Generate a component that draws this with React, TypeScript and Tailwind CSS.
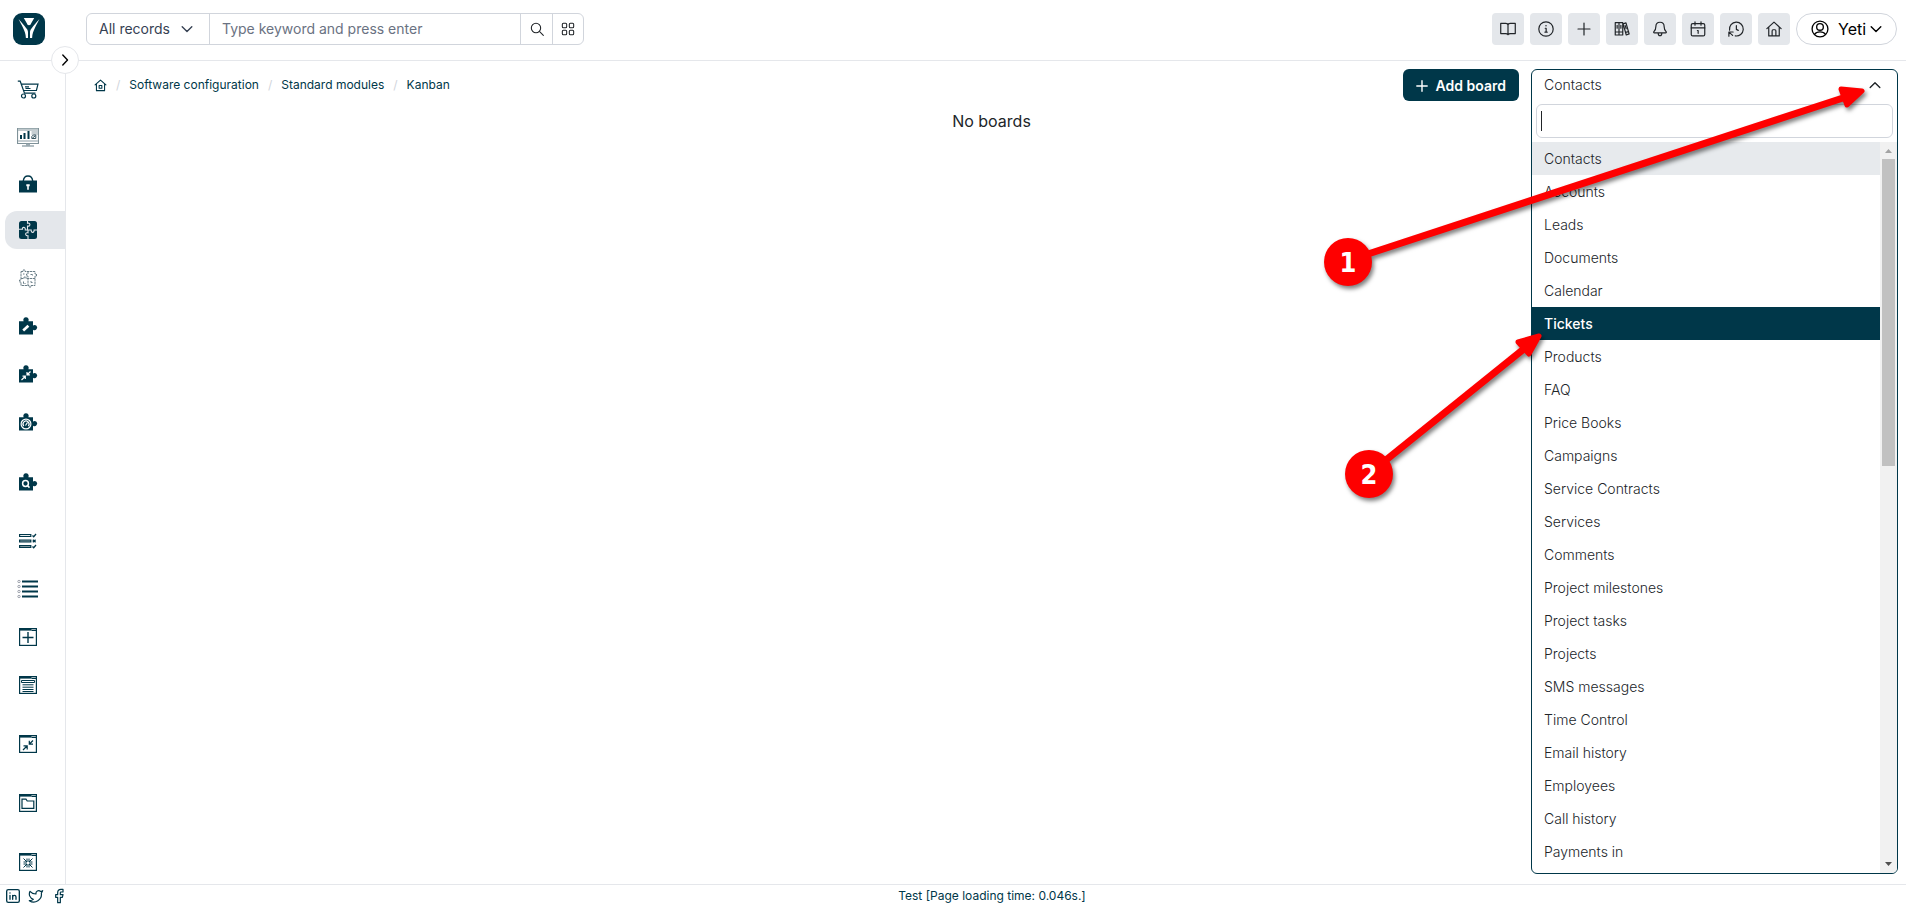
import React, { useState } from "react";
import { Twitter, Facebook } from "lucide-react";

type IconProps = { className?: string; children: React.ReactNode; box?: string; label?: string };

function Line({ className = "size-5", children, box = "0 0 24 24" }: IconProps) {
  return (
    <svg
      className={className}
      viewBox={box}
      fill="none"
      stroke="currentColor"
      strokeWidth="1.6"
      strokeLinecap="round"
      strokeLinejoin="round"
      aria-hidden="true"
    >
      {children}
    </svg>
  );
}

const Chevron = ({ d, className = "size-3" }: { d: string; className?: string }) => (
  <svg className={className} viewBox="0 0 12 12" fill="none" stroke="currentColor" strokeWidth="1.4" strokeLinecap="round" strokeLinejoin="round" aria-hidden="true">
    <path d={d} />
  </svg>
);
const DOWN = "M1.2 3.800 6 8.500 10.800 3.800";
const UP = "M1.2 8.500 6 3.800l4.800 4.700";
const RIGHT = "M3.800 1 8.500 6 3.800 11";

function Logo() {
  return (
    <svg className="size-8" viewBox="0 0 32 32" aria-hidden="true">
      <rect width="32" height="32" rx="9" fill="#003749" />
      <path fill="#fff" d="M10.800 5h10.400l-3 5.300c-.5 1-.8 2-2.200 2s-1.700-1-2.200-2z" />
      <path fill="#fff" d="M5.600 6c1 1.200 6.500 7.500 8.300 10 .8 1.200 1.100 2 1.100 3.500V25h-2.100c-.2-4-1.300-7-2.900-10.200C8.800 12 6.600 8.500 5.600 6z" />
      <path fill="#fff" d="M26.400 6c-1 1.200-6.500 7.500-8.300 10-.8 1.200-1.100 2-1.100 3.500V25h2.100c.2-4 1.300-7 2.900-10.200C23.200 12 25.400 8.500 26.400 6z" />
    </svg>
  );
}

/* ---------- top bar icons ---------- */
const topIcons: { name: string; icon: React.ReactNode }[] = [
  { name: "Manual", icon: <Line><path d="M2.300 4.500h6.500C11 4.500 12 5.700 12 7v12.500c-.7-1-1.800-1.400-3.200-1.400H2.300zM21.700 4.500h-6.500C13 4.500 12 5.700 12 7v12.500c.7-1 1.800-1.400 3.200-1.400h6.500z" /></Line> },
  { name: "Information", icon: <Line><circle cx="12" cy="12" r="9.600" /><path d="M11 11h1.200v5.200M10.600 16.200h3" /><path d="M12 7.500v.3" strokeWidth="2" /></Line> },
  { name: "Create", icon: <Line><path d="M12 4v16M4 12h16" /></Line> },
  {
    name: "Library",
    icon: (
      <Line>
        <path d="M3 3.500h5v16.500H3zM8 3.500h5v16.500H8zM3 16h10M5.500 7v4M10.500 7v4M13.500 5.200l3.800-1.300 4.200 14.600-3.800 1.500zM17 16.500l3.800-1.200M16.300 7.500l1.200 4" />
      </Line>
    ),
  },
  { name: "Notifications", icon: <Line><path d="M12 3c-3.400 0-5.500 2.500-5.500 5.600 0 4.400-1.300 5.600-2.700 7-.5.600-.2 1.600.7 1.600h15c.9 0 1.200-1 .7-1.600-1.400-1.400-2.700-2.600-2.700-7C17.500 5.500 15.400 3 12 3zM9.600 17.500c0 2 1 3.300 2.400 3.300s2.400-1.300 2.400-3.300" /></Line> },
  { name: "Calendar", icon: <Line><rect x="3" y="4.800" width="18" height="16.400" rx="2" /><path d="M3 10.500h18M8 2.500V7M16 2.500V7M11.200 14h1v3.800" /></Line> },
  { name: "History", icon: <Line><path d="M3.400 13.500A9.200 9.200 0 1 1 11 21.200M2.500 16h5.700M2.500 16v5.500M3 16.500l4.500 4" /><path d="M12.500 7.500v5l2.500 1.300" /></Line> },
  { name: "Home", icon: <Line><path d="M2.500 11.500 12 2.800l9.500 8.700M5 9.500v11.700h14V9.500M9.500 21v-6.500c0-1 .4-1.500 1.200-1.500h2.600c.8 0 1.200.5 1.200 1.500V21" /></Line> },
];

/* ---------- side menu icons ---------- */
const Side = ({ children }: { children: React.ReactNode }) => (
  <svg className="h-[22px] w-[22px]" viewBox="0 0 22 22" fill="none" stroke="#003749" strokeWidth="1.2" aria-hidden="true">
    {children}
  </svg>
);

const Piece = ({ children }: { children?: React.ReactNode }) => (
  <Side>
    <path fill="#003749" stroke="none" d="M2 6.200h4.600a2.700 2.700 0 1 1 4.800 0H16v4.300a2.600 2.600 0 1 1 0 4.200V19.500H2z" />
    <g stroke="#fff">{children}</g>
  </Side>
);

const Frame = ({ children }: { children?: React.ReactNode }) => (
  <Side>
    <rect x="2.600" y="2.600" width="16.800" height="16.800" />
    <path d="M2 3.600h12.500" strokeWidth="2" />
    <path d="M14.500 4.400H20" />
    {children}
  </Side>
);

const cart = (
  <Side>
    <path d="M.8 2.200h2.400l4.300 12h11M4.300 5.200H21l-1.600 6.300H6.500M8 7.800h4M8.500 9.500h5" />
    <circle cx="6.500" cy="17" r="2" />
    <circle cx="16.800" cy="17" r="2" />
  </Side>
);
const monitor = (
  <Side>
    <path d="M.5 2.500h21v15H.5z" stroke="#7f9299" />
    <path d="M1 3.800h20" stroke="#bfc9cd" strokeWidth="2.400" />
    <path d="M14.500 4h6.500v5h-6.500z" fill="#c6ced2" stroke="none" />
    <path d="M1 15h20" stroke="#c6ced2" strokeWidth="2" />
    <path d="M9 18.500h4M5 20h12" stroke="#9aa9b0" strokeWidth="1.500" />
    <path d="M4 13V9M7.500 13V7M11.500 13V5" strokeWidth="2" />
    <path d="M14.800 12.500h4v-3.500h-2.500l-1.500 1.500zM15.500 12l2.500-2" stroke="#35525e" strokeWidth="1" />
  </Side>
);
const bag = (
  <Side>
    <path fill="#003749" stroke="none" d="M2 7.500h18v12H2z" />
    <path d="M6.300 8c.3-3.300 2-5 4.700-5s4.400 1.700 4.700 5" strokeWidth="1.400" />
    <path d="M9.300 11.300h3.400v2h-.9v3.400h-1.600v-3.400h-.9z" fill="#fff" stroke="none" />
  </Side>
);
const puzzle = (
  <Side>
    <rect x="2" y="2" width="18" height="18" rx="2.500" fill="#003749" stroke="none" />
    <path
      stroke="#e4e7eb"
      strokeWidth="1.100"
      d="M10.500 2v2.300c2.600-1 3.300 2.600 1 2.800h-1v3.900M2 10.300h3.500c-.8-2.400 3-2.700 2.800 0v.7H11M11 11h3.200c-.2 3.600 3.300 2.700 2.900 0H20M11 11v2.800c-2.700-.8-3.200 2.600-.8 3H11V20"
    />
  </Side>
);
const outlinePuzzle = (
  <Side>
    <g stroke="#6b7f88" strokeWidth="1" strokeDasharray="2.400 .6">
      <path d="M4 4.500h2V3h2v1.500h10V7h1.500v2H18v9.500h-4V20h-2v-1.500H4V15H2.500v-2H4z" />
      <path d="M11 4.500V7H9.500v2H11v9.500M4 11.500h3V10h2v1.500h9" />
      <path d="M13.500 7.500h2v1.500M6 7h1.500M6.500 14.500v2h2M14 14v1.500h2" />
    </g>
  </Side>
);
const checks = (
  <Side>
    <path d="M2.600 4.500h11.200v2H2.600z" fill="#e6ebed" />
    <path d="M2.600 10h11.200v2H2.600zM2.600 15.500h11.200v2H2.600z" fill="#7f959d" />
    <path d="m15.500 5.500 1.200 1.200L19 4M15.800 9.800l2.800 2.500M18.600 9.800l-2.800 2.500M15.500 16.500l1.200 1.200L19 15" strokeWidth="1.300" />
  </Side>
);
const list = (
  <Side>
    <path d="M5 3.500h16M5 8.500h16M5 13.500h16M5 18.500h16" strokeWidth="2" />
    <g stroke="#8a8f9c" strokeWidth=".8">
      <circle cx="2" cy="3.500" r="1.200" /><circle cx="2" cy="8.500" r="1.200" /><circle cx="2" cy="13.500" r="1.200" /><circle cx="2" cy="18.500" r="1.200" />
    </g>
  </Side>
);

type SideItem = { name: string; icon: React.ReactNode; active?: boolean };
const sideGroups: { spacing: string; items: SideItem[] }[] = [
  {
    spacing: "flex flex-col gap-[9px]",
    items: [
      { name: "Marketplace", icon: cart },
      { name: "System monitoring", icon: monitor },
      { name: "Permissions", icon: bag },
    ],
  },
  {
    spacing: "mt-2 flex flex-col gap-[10px]",
    items: [
      { name: "Standard modules", icon: puzzle, active: true },
      { name: "Module management", icon: outlinePuzzle },
      { name: "Edit modules", icon: <Piece><path d="m6.200 15.500 5.200-4.800" strokeWidth="2.600" /></Piece> },
      { name: "Module relations", icon: <Piece><path d="M4.500 17l3.600-3.500M5.500 13.200h2.800V16M13.500 8.500l-3.300 3.200M10 9v2.800h2.900" /></Piece> },
      { name: "Targets", icon: <Piece><circle cx="9" cy="13" r="4.900" /><path d="M6.800 15a3 3 0 1 1 4.500 0M8.500 14.500l2-3" /></Piece> },
    ],
  },
  {
    spacing: "mt-[22px] flex flex-col",
    items: [{ name: "Search setup", icon: <Piece><circle cx="8.500" cy="12.500" r="2.900" strokeWidth="1.500" /><path d="m10.500 14.600 2 2" strokeWidth="1.500" /></Piece> }],
  },
  {
    spacing: "mt-[21px] flex flex-col gap-[10px]",
    items: [
      { name: "Advanced permissions", icon: checks },
      { name: "Picklists", icon: list },
      { name: "Add field", icon: <Frame><path d="M11 6v11M5.500 11.500h11" strokeWidth="1.400" /></Frame> },
      { name: "Layouts", icon: <Frame><path d="M4.500 6.500h13v2h-13zM5.500 10.800h11M5.500 13.200h11M5.500 15.500h11M5.500 17.500h11" strokeWidth="1" /></Frame> },
    ],
  },
  { spacing: "mt-[21px] flex flex-col", items: [{ name: "Processes", icon: <Frame><path d="m6 17 4-4M6.500 12.800h3.700v3.700M16 7.500l-3.500 3.500M12.300 7.700V11.200H16" /></Frame> }] },
  { spacing: "mt-[21px] flex flex-col", items: [{ name: "Files", icon: <Frame><path d="M5 16.300V7.200h4l1.200 1.800h6.600v7.300z" /></Frame> }] },
  { spacing: "mt-[21px] flex flex-col", items: [{ name: "Integration", icon: <Frame><path d="m6.500 7.500 3.500 3.500M10 7.500V11H6.500M15.500 7.500 12 11M12 7.500V11h3.500M6.500 16.500 10 13M10 16.500V13H6.500M15.500 16.500 12 13M12 16.500V13h3.500" strokeWidth="1" /></Frame> }] },
];

const modules = [
  "Contacts", "Accounts", "Leads", "Documents", "Calendar", "Tickets", "Products", "FAQ", "Price Books", "Campaigns",
  "Service Contracts", "Services", "Comments", "Project milestones", "Project tasks", "Projects", "SMS messages",
  "Time Control", "Email history", "Employees", "Call history", "Payments in",
];

function Header() {
  return (
    <header className="flex h-[61px] shrink-0 items-start border-b border-gray-200 pt-[13px] pr-[9px] text-[#212529]">
      <a href="#home" aria-label="YetiForce" className="ml-[13px]"><Logo /></a>
      <form className="ml-[41px] flex h-8 w-[498px] overflow-hidden rounded-md border border-gray-300" onSubmit={(e) => e.preventDefault()}>
        <button type="button" className="flex w-[122px] items-center justify-between pr-4 pl-3 text-sm text-gray-700">
          All records
          <Chevron d={DOWN} />
        </button>
        <input
          aria-label="Search"
          placeholder="Type keyword and press enter"
          className="min-w-0 flex-1 border-l border-gray-300 px-3 text-sm outline-none placeholder:text-gray-500"
        />
        <button type="button" aria-label="Search records" className="flex w-8 items-center justify-center border-l border-gray-300">
          <Line className="size-4"><circle cx="10.500" cy="10.500" r="7" /><path d="m16 16 5.500 5.500" /></Line>
        </button>
        <button type="button" aria-label="Advanced search" className="flex w-[31px] items-center justify-center border-l border-gray-300">
          <Line className="size-4"><rect x="3.500" y="3.500" width="6.500" height="6.500" rx="1.500" /><rect x="14" y="3.500" width="6.500" height="6.500" rx="1.500" /><rect x="3.500" y="14" width="6.500" height="6.500" rx="1.500" /><rect x="14" y="14" width="6.500" height="6.500" rx="1.500" /></Line>
        </button>
      </form>
      <div className="ml-auto flex gap-[6px]">
        {topIcons.map((t) => (
          <button key={t.name} type="button" aria-label={t.name} className="flex size-8 items-center justify-center rounded bg-[#e4e7eb] [&>svg]:size-[18px]">
            {t.icon}
          </button>
        ))}
        <button type="button" className="flex h-8 w-[101px] items-center rounded-2xl border border-gray-300 pl-[13px] text-base text-black">
          <Line className="size-5"><circle cx="12" cy="12" r="9.500" /><circle cx="12" cy="9.500" r="4" /><path d="M5.500 18.500c1.500-2.500 3.500-3 6.500-3s5 .5 6.500 3" /></Line>
          <span className="ml-2 mr-1">Yeti</span>
          <Chevron d={DOWN} />
        </button>
      </div>
    </header>
  );
}

function SideMenu() {
  return (
    <aside className="relative w-[66px] shrink-0 border-r border-gray-200">
      <button type="button" aria-label="Expand menu" className="absolute -top-[15px] -right-[14px] z-10 flex size-7 items-center justify-center rounded-full border border-gray-200 bg-white text-black">
        <Chevron d={RIGHT} />
      </button>
      <nav className="flex flex-col pt-[10px]">
        {sideGroups.map((group) => (
          <div key={group.items[0].name} className={group.spacing}>
            {group.items.map((item) => (
              <a
                key={item.name}
                href="#menu"
                aria-label={item.name}
                className={item.active ? "ml-[5px] flex h-[38px] items-center rounded-l-xl bg-[#e4e7eb] pl-3" : "ml-[5px] flex h-[38px] items-center pl-3"}
              >
                {item.icon}
              </a>
            ))}
          </div>
        ))}
      </nav>
    </aside>
  );
}

function ModuleSelect() {
  const [query, setQuery] = useState("");
  return (
    <section className="flex min-h-0 w-[367px] shrink-0 flex-col overflow-hidden rounded-md border border-[#003749] text-sm font-light text-[#212529]">
      <button type="button" aria-expanded="true" className="flex h-8 shrink-0 items-center justify-between pr-4 pb-0.5 pl-3">
        Contacts
        <Chevron d={UP} />
      </button>
      <div className="relative px-1 pt-0.5 pb-1">
        <input
          aria-label="Filter modules"
          value={query}
          onChange={(e) => setQuery(e.target.value)}
          className="block h-[34px] w-full rounded-md border border-gray-300 px-1 text-base outline-none"
        />
        {query === "" && <span className="pointer-events-none absolute top-[9px] left-[9px] h-5 w-px bg-[#212529]" />}
      </div>
      <div className="flex min-h-0 flex-1">
        <ul className="min-w-0 flex-1 overflow-y-auto [scrollbar-width:none]" role="listbox" aria-label="Modules">
          {modules.map((m) => (
            <li
              key={m}
              role="option"
              aria-selected={m === "Contacts"}
              className={
                m === "Tickets"
                  ? "h-[33px] bg-[#003749] px-3 leading-[33px] font-medium text-white"
                  : m === "Contacts"
                    ? "h-[33px] bg-[#e7eaed] px-3 leading-[33px]"
                    : "h-[33px] px-3 leading-[33px]"
              }
            >
              {m}
            </li>
          ))}
        </ul>
        <div className="flex w-[17px] flex-col items-center bg-[#f1f1f1]" aria-hidden="true">
          <svg className="h-[17px] w-[17px] shrink-0" viewBox="0 0 17 17"><path d="M5 11h7L8.500 7z" fill="#a3a3a3" /></svg>
          <div className="flex min-h-0 w-[13px] flex-1 flex-col">
            <div className="h-[44%] bg-[#c1c1c1]" />
          </div>
          <svg className="h-[17px] w-[17px] shrink-0" viewBox="0 0 17 17"><path d="M5 6h7l-3.500 4z" fill="#505050" /></svg>
        </div>
      </div>
    </section>
  );
}

function Annotations() {
  return (
    <svg className="pointer-events-none absolute top-0 right-0 z-20 h-[520px] w-[606px]" viewBox="1300 0 606 520" aria-hidden="true">
      <g fill="#fe0000" stroke="#fe0000" style={{ filter: "drop-shadow(2px 3px 2px rgba(0,0,0,0.5))" }}>
        <path d="M1368 254 1846 97" strokeWidth="7" />
        <path d="m1862 91-21-2 6 16z" strokeWidth="5" strokeLinejoin="round" />
        <path d="m1386 460 139-112" strokeWidth="7" />
        <path d="m1539 336-21 6 11 12z" strokeWidth="5" strokeLinejoin="round" />
        <circle cx="1348" cy="262" r="24" stroke="none" />
        <circle cx="1369" cy="474" r="24" stroke="none" />
      </g>
      <g fill="#fff" fontFamily="'DejaVu Sans Condensed', 'DejaVu Sans', sans-serif" fontWeight="700" fontSize="27" textAnchor="middle">
        <text x="1348" y="272">1</text>
        <text x="1369" y="484">2</text>
      </g>
    </svg>
  );
}

export default function App() {
  return (
    <div className="relative flex h-screen flex-col overflow-hidden bg-white font-['Inter',sans-serif]">
      <Header />
      <div className="flex min-h-0 flex-1">
        <SideMenu />
        <main className="flex min-w-0 flex-1 flex-col pt-2 pr-2 pb-[10px] pl-[28px]">
          <div className="flex min-h-0 flex-1 gap-3">
            <div className="min-w-0 flex-1">
              <div className="flex h-8 items-center justify-between">
                <nav aria-label="Breadcrumb" className="flex items-center gap-[9px] text-xs text-[#003749]">
                  <a href="#home" aria-label="Home">
                    <Line className="size-[13px]"><path strokeWidth="2" d="M2 11 12 2l10 9M4.500 9.500V21.500h15V9.500M9.500 12h5v5h-5z" /></Line>
                  </a>
                  <span className="text-gray-300">/</span>
                  <a href="#configuration">Software configuration</a>
                  <span className="text-gray-300">/</span>
                  <a href="#modules">Standard modules</a>
                  <span className="text-gray-300">/</span>
                  <a href="#kanban">Kanban</a>
                </nav>
                <button type="button" className="flex h-8 items-center gap-2 rounded-md bg-[#003749] px-[13px] pt-0.5 text-sm font-semibold text-white">
                  <Chevron className="size-3" d="M6 .8v10.400M.8 6h10.400" />
                  Add board
                </button>
              </div>
              <p className="mt-2 pl-[370px] text-center text-base text-[#212529]">No boards</p>
            </div>
            <ModuleSelect />
          </div>
        </main>
      </div>
      <footer className="flex h-5 shrink-0 items-center border-t border-gray-200 pt-0.5 text-xs text-[#003749]">
        <div className="flex w-[78px] shrink-0 items-center gap-[7px] pl-[5px]">
          <a href="#linkedin" aria-label="LinkedIn">
            <Line className="size-4"><rect x="2.500" y="2.500" width="19" height="19" rx="2.500" strokeWidth="2" /><path strokeWidth="2" d="M7.500 11v6M7.500 7.300v.2M11.500 17v-6M11.500 13.500c0-3.300 5-3.300 5 0V17" /></Line>
          </a>
          <a href="#twitter" aria-label="Twitter"><Twitter className="size-4" strokeWidth={1.8} /></a>
          <a href="#facebook" aria-label="Facebook"><Facebook className="size-4" strokeWidth={1.8} /></a>
        </div>
        <p className="flex-1 text-center">Test [Page loading time: 0.046s.]</p>
      </footer>
      <Annotations />
    </div>
  );
}
